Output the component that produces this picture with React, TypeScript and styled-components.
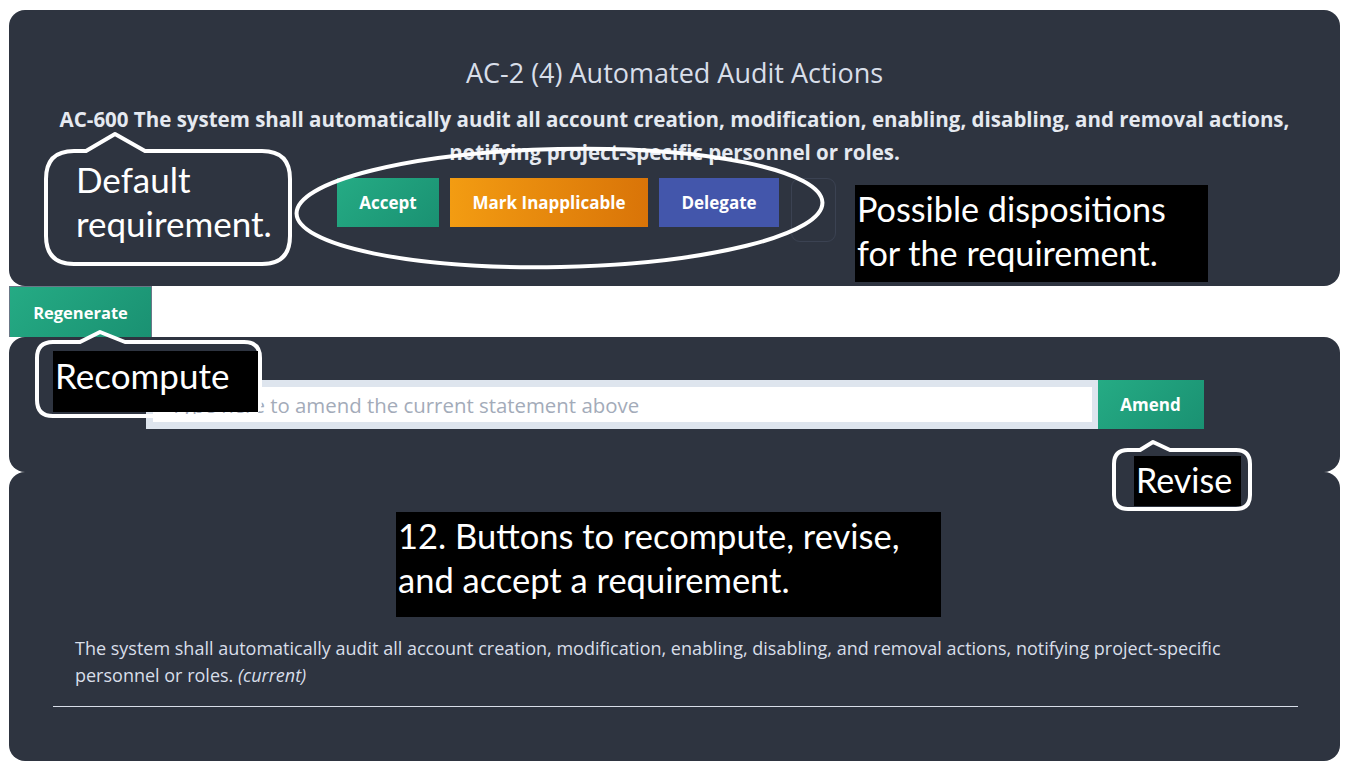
import React from "react";
import styled, { createGlobalStyle, css } from "styled-components";

const GlobalStyle = createGlobalStyle`
  html, body { margin: 0; padding: 0; background: #ffffff; }
  body { font-family: "Open Sans", "Noto Sans", sans-serif; }
  * { box-sizing: border-box; }
`;

const Page = styled.div`
  position: relative;
  width: 1360px;
  height: 773px;
  padding: 10px 20px 0 9px;
  display: flex;
  flex-direction: column;
  overflow: hidden;
`;

const Card = styled.section`
  background: #2e3440;
  border-radius: 16px;
  color: #d8dee9;
`;

const RequirementCard = styled(Card)`
  height: 276px;
  padding: 45px 30px 0;
  display: flex;
  flex-direction: column;
  align-items: center;
`;

const Title = styled.h2`
  margin: 0;
  font-size: 27px;
  line-height: 36px;
  font-weight: 500;
  color: #d8dee9;
`;

const Statement = styled.p`
  margin: 12px 0 0;
  font-size: 20.5px;
  line-height: 33px;
  font-weight: 700;
  text-align: center;
  color: #e5e9f0;
`;

const ButtonRow = styled.div`
  align-self: stretch;
  margin-top: 9px;
  padding-left: 298px;
  display: flex;
  align-items: flex-start;
  gap: 11px;
`;

const variants = {
  accept: css`background: linear-gradient(135deg, #25ab84 0%, #1a9172 100%);`,
  inapplicable: css`background: linear-gradient(90deg, #f39c12 0%, #d97408 100%);`,
  delegate: css`background: #4356ab;`,
};

const ActionButton = styled.button<{ $variant: keyof typeof variants; $w: number }>`
  ${(p) => variants[p.$variant]}
  width: ${(p) => p.$w}px;
  height: 49px;
  border: none;
  color: #ffffff;
  font-family: "Open Sans", "Noto Sans", sans-serif;
  font-size: 17px;
  font-weight: 700;
  cursor: pointer;
`;

const EmptySlot = styled.div`
  width: 45px;
  height: 64px;
  margin-left: 1px;
  border: 1px solid #3b4252;
  border-radius: 9px;
`;

const RegenerateButton = styled.button`
  align-self: flex-start;
  width: 143px;
  height: 51px;
  border: 1px solid #6b7787;
  border-bottom: none;
  background: linear-gradient(135deg, #25ab84 0%, #1a9172 100%);
  color: #ffffff;
  font-family: "Open Sans", "Noto Sans", sans-serif;
  font-size: 16.5px;
  font-weight: 700;
`;

const AmendCard = styled(Card)`
  height: 135px;
  display: flex;
  align-items: center;
  justify-content: center;
`;

const AmendRow = styled.div`
  display: flex;
  align-items: stretch;
  height: 49px;
`;

const AmendInput = styled.input`
  width: 952px;
  height: 49px;
  border: 7px solid #dee5ee;
  border-right-width: 6px;
  background: #ffffff;
  padding: 0 18px;
  font-family: "Open Sans", "Noto Sans", sans-serif;
  font-size: 20.4px;
  color: #333;
  outline: none;
  &::placeholder { color: #a3abb9; }
`;

const AmendButton = styled.button`
  width: 106px;
  border: none;
  background: linear-gradient(135deg, #25ab84 0%, #1a9172 100%);
  color: #ffffff;
  font-family: "Open Sans", "Noto Sans", sans-serif;
  font-size: 17px;
  font-weight: 700;
`;

const HistoryCard = styled(Card)`
  height: 289px;
  padding: 163px 42px 0 44px;
`;

const HistoryText = styled.p`
  margin: 0;
  padding: 0 22px;
  font-size: 18px;
  line-height: 27px;
  color: #d8dee9;
  em { font-style: italic; }
`;

const Rule = styled.hr`
  margin: 17px 0 0;
  border: none;
  border-top: 1px solid #d8dee9;
`;

/* ---------- annotation overlays ---------- */

const Overlay = styled.div`
  position: absolute;
  inset: 0;
  pointer-events: none;
`;

const OverlaySvg = styled.svg`
  position: absolute;
  inset: 0;
  overflow: visible;
`;

const NoteText = styled.div<{ $x: number; $y: number; $size?: number }>`
  position: absolute;
  left: ${(p) => p.$x}px;
  top: ${(p) => p.$y}px;
  font-family: Lato, "Open Sans", sans-serif;
  font-size: ${(p) => p.$size ?? 35}px;
  line-height: 44px;
  color: #ffffff;
  white-space: nowrap;
`;

const BlackNote = styled.div<{ $x: number; $y: number; $w: number; $h: number; $size?: number; $pt?: number }>`
  position: absolute;
  left: ${(p) => p.$x}px;
  top: ${(p) => p.$y}px;
  width: ${(p) => p.$w}px;
  height: ${(p) => p.$h}px;
  background: #000000;
  color: #ffffff;
  font-family: Lato, "Open Sans", sans-serif;
  font-size: ${(p) => p.$size ?? 34}px;
  line-height: 44px;
  padding: ${(p) => p.$pt ?? 3}px 0 0 2px;
  white-space: nowrap;
`;

function bubblePath(
  x1: number, y1: number, x2: number, y2: number, r: number,
  px1: number, px: number, py: number, px2: number
) {
  return `M ${x1 + r} ${y1} L ${px1} ${y1} L ${px} ${py} L ${px2} ${y1} L ${x2 - r} ${y1}
    Q ${x2} ${y1} ${x2} ${y1 + r} L ${x2} ${y2 - r} Q ${x2} ${y2} ${x2 - r} ${y2}
    L ${x1 + r} ${y2} Q ${x1} ${y2} ${x1} ${y2 - r} L ${x1} ${y1 + r} Q ${x1} ${y1} ${x1 + r} ${y1} Z`;
}

export default function App() {
  return (
    <>
      <GlobalStyle />
      <Page>
        <RequirementCard>
          <Title>AC-2 (4) Automated Audit Actions</Title>
          <Statement>
            AC-600 The system shall automatically audit all account creation, modification, enabling, disabling, and removal actions,
            <br />
            notifying project-specific personnel or roles.
          </Statement>
          <ButtonRow>
            <ActionButton $variant="accept" $w={102}>Accept</ActionButton>
            <ActionButton $variant="inapplicable" $w={198}>Mark Inapplicable</ActionButton>
            <ActionButton $variant="delegate" $w={120}>Delegate</ActionButton>
            <EmptySlot />
          </ButtonRow>
        </RequirementCard>

        <RegenerateButton>Regenerate</RegenerateButton>

        <AmendCard>
          <AmendRow>
            <AmendInput placeholder="Type here to amend the current statement above" />
            <AmendButton>Amend</AmendButton>
          </AmendRow>
        </AmendCard>

        <HistoryCard>
          <HistoryText>
            The system shall automatically audit all account creation, modification, enabling, disabling, and removal actions, notifying project-specific personnel or roles. <em>(current)</em>
          </HistoryText>
          <Rule />
        </HistoryCard>

        <Overlay>
          <OverlaySvg width="1360" height="773" viewBox="0 0 1360 773">
            <g fill="none" stroke="#ffffff" strokeWidth="4" strokeLinejoin="round">
              <path d={bubblePath(46, 151, 290, 264, 28, 86, 115, 134, 145)} />
              <ellipse cx="559.5" cy="208" rx="263" ry="59" transform="rotate(-1.2 559.5 208)" />
              <path d={bubblePath(37, 342, 260, 416, 16, 80, 100, 332, 125)} />
              <path d={bubblePath(1114, 450, 1250, 509, 14, 1140, 1153, 442, 1170)} />
            </g>
          </OverlaySvg>
          <NoteText $x={76} $y={157}>Default</NoteText>
          <NoteText $x={76} $y={201}>requirement.</NoteText>
          <BlackNote $x={53} $y={351} $w={205} $h={61} $size={35} $pt={2}>Recompute</BlackNote>
          <BlackNote $x={1134} $y={456} $w={107} $h={50} $pt={2}>Revise</BlackNote>
          <BlackNote $x={855} $y={185} $w={353} $h={97} $size={34.2} $pt={2}>
            Possible dispositions
            <br />
            for the requirement.
          </BlackNote>
          <BlackNote $x={396} $y={512} $w={545} $h={105} $size={34.5} $pt={2}>
            12. Buttons to recompute, revise,
            <br />
            and accept a requirement.
          </BlackNote>
        </Overlay>
      </Page>
    </>
  );
}
